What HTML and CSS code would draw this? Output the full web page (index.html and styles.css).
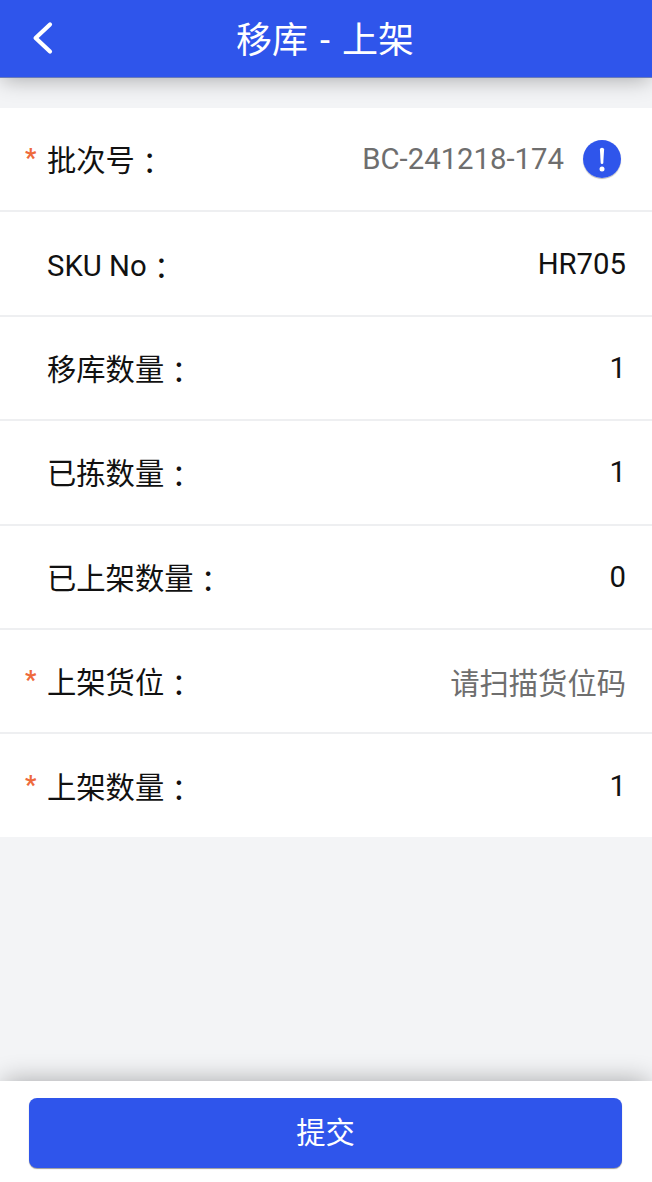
FILE: index.html
```html
<!DOCTYPE html>
<html lang="zh-CN">
<head>
    <meta charset="UTF-8">
    <meta name="viewport" content="width=device-width, initial-scale=1.0">
    <title>移库 - 上架</title>
    <link rel="stylesheet" href="styles.css">
</head>
<body>
    <div class="page">
        <header class="nav-bar">
            <a href="#" class="back-btn">
                <svg width="24" height="36" viewBox="0 0 24 36"><path d="M21 4.5 L6.6 18 L21 31.5" fill="none" stroke="#fff" stroke-width="4.2" stroke-linecap="round" stroke-linejoin="round"/></svg>
            </a>
            <h1 class="nav-title">移库 - 上架</h1>
        </header>

        <main class="content">
            <div class="form">
                <div class="row">
                    <span class="label required">批次号<span class="colon" lang="zh-TW">：</span></span>
                    <span class="value muted">BC-241218-174</span>
                    <span class="info-icon">
                        <svg width="38" height="38" viewBox="0 0 38 38"><circle cx="19" cy="19" r="19" fill="#2f55eb"/><path d="M16.9 9.4 Q16.9 7.8 19 7.8 Q21.1 7.8 21.1 9.4 L20.3 23 Q20.2 24 19 24 Q17.8 24 17.7 23 Z" fill="#fff"/><circle cx="19" cy="29" r="2.5" fill="#fff"/></svg>
                    </span>
                </div>
                <div class="row">
                    <span class="label">SKU No<span class="colon" lang="zh-TW">：</span></span>
                    <span class="value">HR705</span>
                </div>
                <div class="row">
                    <span class="label">移库数量<span class="colon" lang="zh-TW">：</span></span>
                    <span class="value">1</span>
                </div>
                <div class="row">
                    <span class="label">已拣数量<span class="colon" lang="zh-TW">：</span></span>
                    <span class="value">1</span>
                </div>
                <div class="row">
                    <span class="label">已上架数量<span class="colon" lang="zh-TW">：</span></span>
                    <span class="value">0</span>
                </div>
                <div class="row">
                    <span class="label required">上架货位<span class="colon" lang="zh-TW">：</span></span>
                    <span class="value muted">请扫描货位码</span>
                </div>
                <div class="row">
                    <span class="label required">上架数量<span class="colon" lang="zh-TW">：</span></span>
                    <span class="value">1</span>
                </div>
            </div>
        </main>

        <footer class="bottom-bar">
            <button class="submit-btn">提交</button>
        </footer>
    </div>
</body>
</html>
```

FILE: styles.css
```css
* {
    margin: 0;
    padding: 0;
    box-sizing: border-box;
}

html, body {
    height: 100%;
}

body {
    font-family: Roboto, "Noto Sans CJK SC", sans-serif;
    background-color: #f3f4f6;
    color: #111;
}

.page {
    height: 100%;
    display: flex;
    flex-direction: column;
    overflow: hidden;
}

.nav-bar {
    position: relative;
    z-index: 1;
    height: 78px;
    flex-shrink: 0;
    display: flex;
    align-items: center;
    justify-content: center;
    background: #2f55eb;
    border-bottom: 1px solid #6b7cb8;
    box-shadow: 0 4px 20px -2px rgba(0, 0, 0, 0.3);
}

.back-btn {
    position: absolute;
    left: 29px;
    top: 20px;
    line-height: 0;
}

.nav-title {
    padding: 0 2px 3px 0;
    font-size: 36px;
    font-weight: 400;
    word-spacing: 3px;
    color: #fff;
}

.content {
    flex: 1;
    padding-top: 30px;
}

.form {
    background: #fff;
}

.row {
    height: 104.4px;
    display: flex;
    align-items: center;
    padding: 0 26px 0 47px;
    border-bottom: 2px solid #eeeff1;
}

.row:last-child {
    height: 102.6px;
    border-bottom: none;
}

.label {
    position: relative;
    flex: 1;
    padding-top: 4px;
    font-size: 29.3px;
    line-height: 40px;
}

.label.required::before {
    content: "*";
    position: absolute;
    left: -22px;
    top: 7px;
    font-size: 25px;
    font-weight: 700;
    line-height: 29px;
    color: #ee6a3c;
}

.colon {
    font-family: "Noto Sans CJK TC", sans-serif;
    line-height: 0;
    vertical-align: -3px;
}

.value {
    font-size: 29.3px;
}

.muted {
    color: #6e6e6e;
}

.info-icon {
    display: flex;
    margin: 0 5px 0 19px;
    border-radius: 50%;
    box-shadow: 0 1px 1px rgba(0, 0, 0, 0.3);
}

.bottom-bar {
    position: relative;
    height: 101px;
    flex-shrink: 0;
    padding: 17px 30px 0 29px;
    background: #fff;
    box-shadow: 0 -4px 24px -4px rgba(0, 0, 0, 0.32);
}

.submit-btn {
    display: block;
    width: 100%;
    height: 70px;
    padding-bottom: 7px;
    border: none;
    border-radius: 8px;
    background: #2f55eb;
    box-shadow: 0 1px 1px rgba(0, 0, 0, 0.4);
    color: #fff;
    font-family: inherit;
    font-size: 29.3px;
}
```
